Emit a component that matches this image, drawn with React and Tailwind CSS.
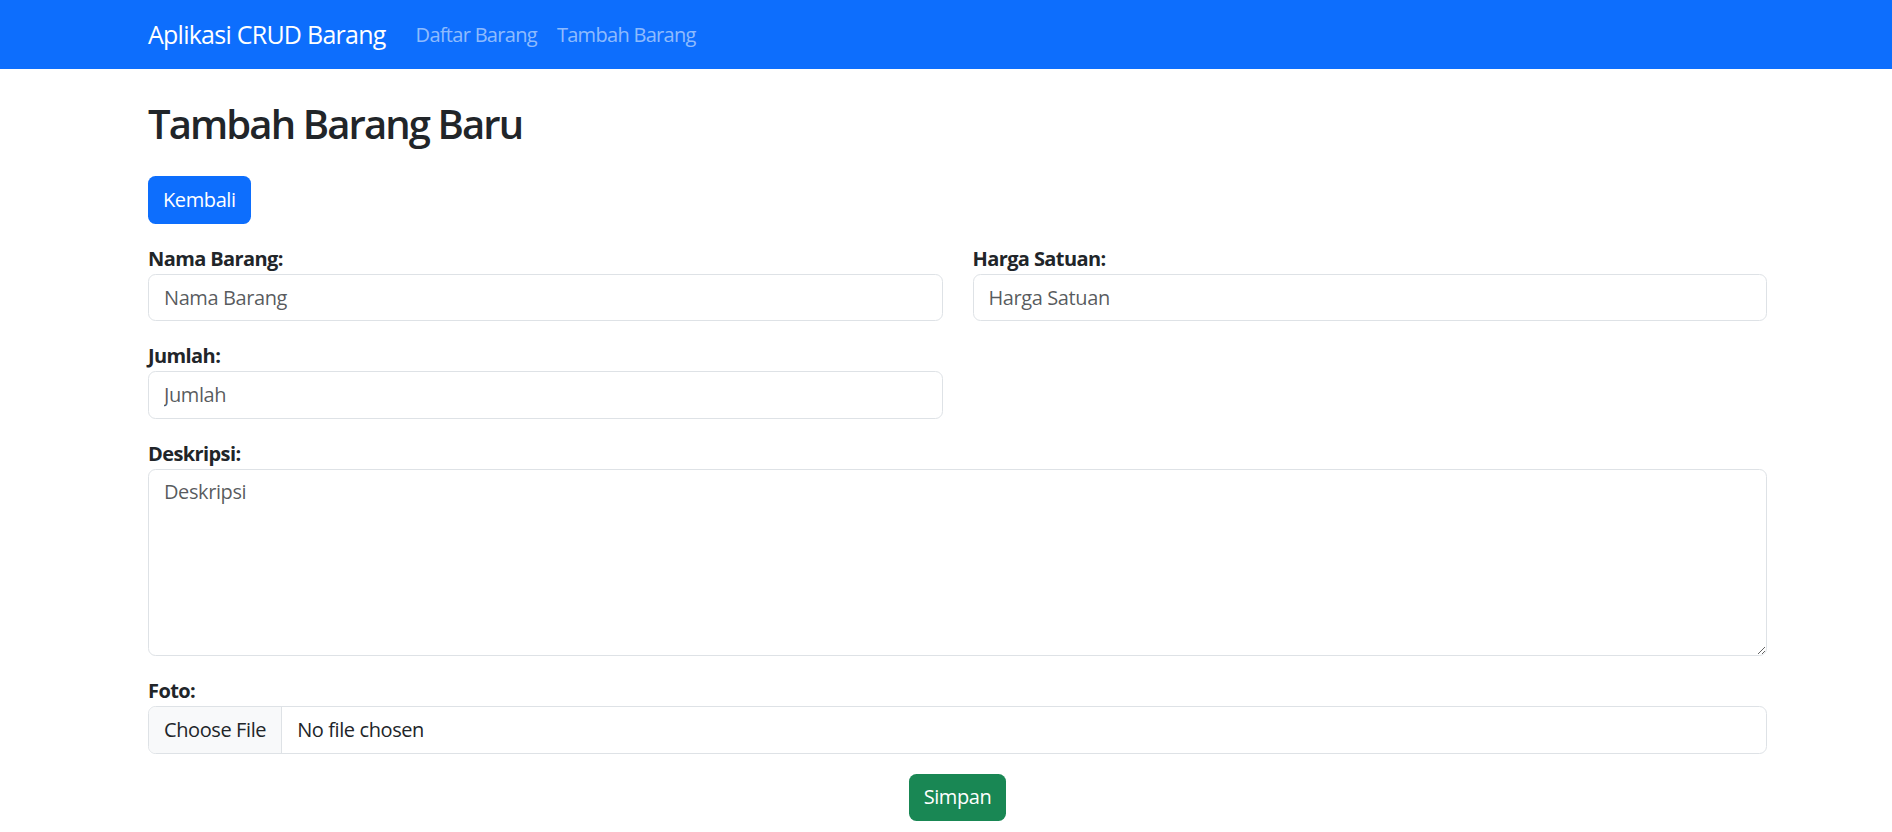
import { useState } from "react";

function Field({ label, children }) {
  return (
    <div className="mb-[20px]">
      <label className="block h-[30px] text-[20px] leading-[30px] font-bold text-[#212529] tracking-[-0.03em]">{label}</label>
      {children}
    </div>
  );
}

const inputClass =
  "block w-full h-[47.5px] px-[15px] text-[20px] text-[#212529] bg-white border border-[#dee2e6] rounded-[7.5px] outline-none placeholder:text-[#212529bf]";

export default function App() {
  const [form, setForm] = useState({ nama: "", harga: "", jumlah: "", deskripsi: "" });

  return (
    <div className="min-h-[832px] bg-white font-['Open_Sans',sans-serif] tracking-[-0.025em]">
      <nav className="h-[69px] bg-[#0d6efd] flex items-center pl-[148px]">
        <a href="#" className="text-[25px] leading-[37px] text-white mr-[20px] tracking-[-0.03em]">Aplikasi CRUD Barang</a>
        <a href="#" className="px-[10px] text-[20px] leading-[30px] text-[#ffffff8c] tracking-[-0.035em]">Daftar Barang</a>
        <a href="#" className="px-[10px] text-[20px] leading-[30px] text-[#ffffff8c] tracking-[-0.035em]">Tambah Barang</a>
      </nav>

      <main className="ml-[148px] w-[1619px]">
        <h1 className="mt-[31px] mb-[28px] text-[40px] leading-[48px] font-semibold text-[#212529] tracking-[-0.047em]">Tambah Barang Baru</h1>
        <button className="mb-[20px] h-[47.5px] px-[15px] bg-[#0d6efd] text-white text-[20px] rounded-[7.5px]">Kembali</button>

        <form onSubmit={(e) => e.preventDefault()}>
          <div className="grid grid-cols-2 gap-x-[30px]">
            <Field label="Nama Barang:">
              <input
                className={inputClass}
                placeholder="Nama Barang"
                value={form.nama}
                onChange={(e) => setForm({ ...form, nama: e.target.value })}
              />
            </Field>
            <Field label="Harga Satuan:">
              <input
                className={inputClass}
                placeholder="Harga Satuan"
                value={form.harga}
                onChange={(e) => setForm({ ...form, harga: e.target.value })}
              />
            </Field>
            <Field label="Jumlah:">
              <input
                className={inputClass}
                placeholder="Jumlah"
                value={form.jumlah}
                onChange={(e) => setForm({ ...form, jumlah: e.target.value })}
              />
            </Field>
          </div>

          <Field label="Deskripsi:">
            <textarea
              className="block w-full h-[187.5px] px-[15px] py-[7.5px] text-[20px] leading-[30px] text-[#212529] bg-white border border-[#dee2e6] rounded-[7.5px] outline-none placeholder:text-[#212529bf]"
              placeholder="Deskripsi"
              value={form.deskripsi}
              onChange={(e) => setForm({ ...form, deskripsi: e.target.value })}
            />
          </Field>

          <Field label="Foto:">
            <div className="flex h-[47.5px] border border-[#dee2e6] rounded-[7.5px] overflow-hidden text-[20px] text-[#212529]">
              <span className="flex items-center px-[15px] bg-[#f8f9fa] border-r border-[#dee2e6]">Choose File</span>
              <span className="flex items-center px-[15px]">No file chosen</span>
            </div>
          </Field>

          <div className="text-center">
            <button type="submit" className="h-[47.5px] px-[15px] bg-[#198754] text-white text-[20px] rounded-[7.5px]">Simpan</button>
          </div>
        </form>
      </main>
    </div>
  );
}
